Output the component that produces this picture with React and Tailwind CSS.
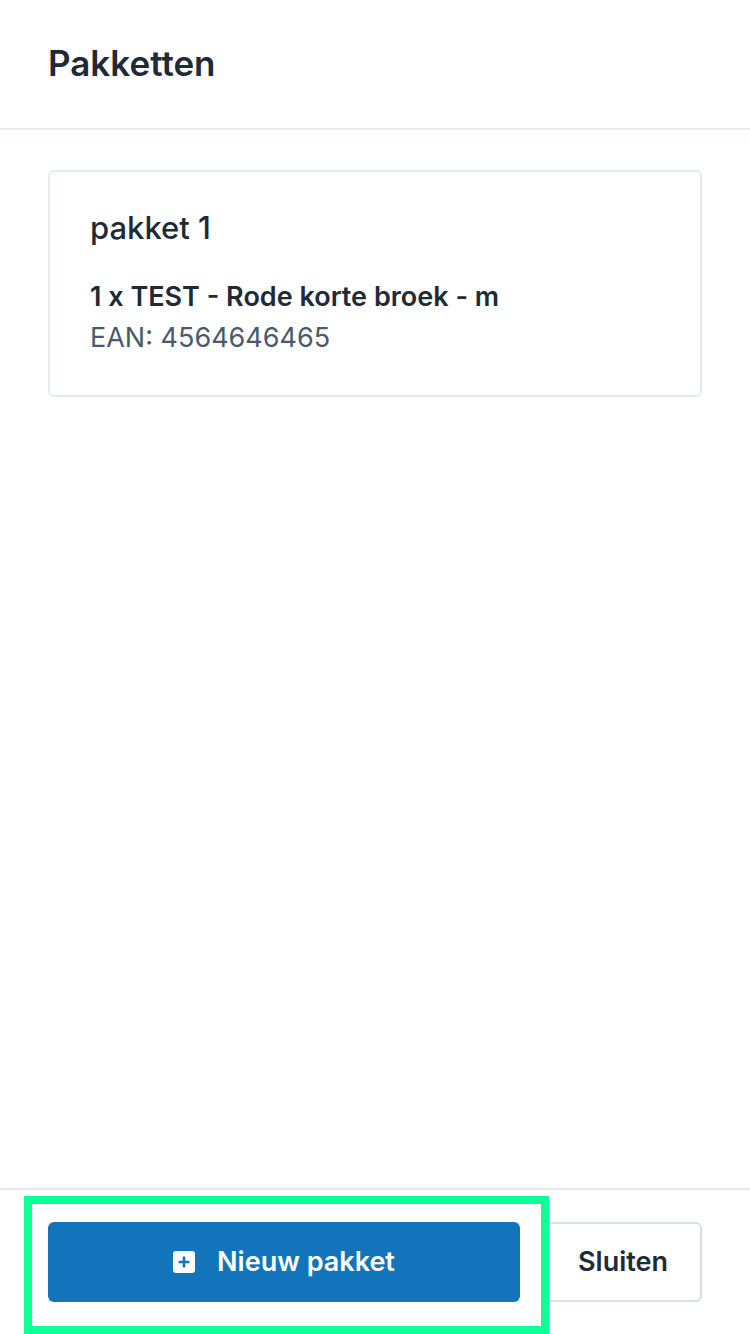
import React from 'react';

function PlusSquare() {
  return (
    <svg width="22" height="22" viewBox="0 0 22 22" aria-hidden="true">
      <rect x="0" y="0" width="22" height="22" rx="3" fill="#ffffff" />
      <path d="M11 5.5v11M5.5 11h11" stroke="#1275bb" strokeWidth="2.6" strokeLinecap="butt" />
    </svg>
  );
}

function PackageCard({ name, items }) {
  return (
    <div className="rounded-md border-2 border-[#e6eaee] px-10 pt-[38px] pb-[37px]">
      <h2 className="text-[31px] leading-9 font-medium text-[#1f2a37]">{name}</h2>
      <div className="mt-[30px]">
        {items.map((item) => (
          <div key={item.ean}>
            <p className="text-[27px] leading-[41px] font-semibold text-[#1f2a37]">
              {item.qty} x {item.title}
            </p>
            <p className="text-[27px] leading-[41px] text-[#4a5a6e]">EAN: {item.ean}</p>
          </div>
        ))}
      </div>
    </div>
  );
}

export default function App() {
  return (
    <div
      className="flex h-[1334px] w-[750px] flex-col bg-white"
      style={{ fontFamily: 'Inter, "Noto Sans", sans-serif' }}
    >
      <header className="flex h-[130px] items-center border-b-2 border-[#e6eaee] px-12 pb-[2px]">
        <h1 className="text-[35px] leading-10 font-semibold text-[#1f2a37]">Pakketten</h1>
      </header>

      <main className="flex-1 px-12 pt-10">
        <PackageCard
          name="pakket 1"
          items={[{ qty: 1, title: 'TEST - Rode korte broek - m', ean: '4564646465' }]}
        />
      </main>

      <footer className="flex gap-6 border-t-2 border-[#e6eaee] px-12 pt-8 pb-8">
        <div className="relative flex-1">
          <button className="flex h-20 w-full items-center justify-center gap-[22px] rounded-md bg-[#1275bb] text-[27px] font-semibold text-white">
            <PlusSquare />
            <span>Nieuw pakket</span>
          </button>
          <div className="pointer-events-none absolute -top-[26px] -right-[29px] -bottom-[32px] -left-6 border-8 border-[#0dff96]" />
        </div>
        <button className="h-20 w-[158px] rounded-md border-2 border-[#d7dfe7] text-[27px] font-semibold text-[#1f2a37]">
          Sluiten
        </button>
      </footer>
    </div>
  );
}
